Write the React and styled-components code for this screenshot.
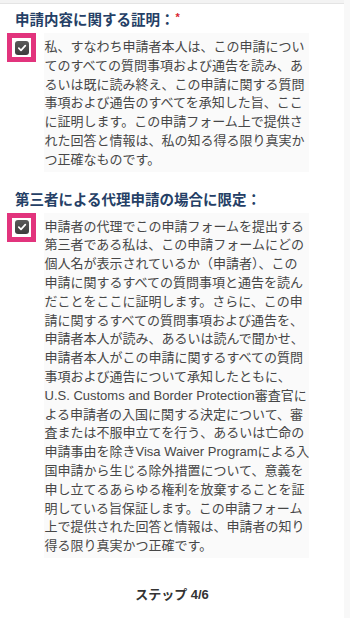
import React from "react";
import styled, { createGlobalStyle } from "styled-components";

const GlobalStyle = createGlobalStyle`
  html, body { margin: 0; padding: 0; background: #ffffff; }
  body { font-family: "Liberation Sans", "Noto Sans CJK JP", sans-serif; }
`;

const Page = styled.div`
  display: flex;
  width: 350px;
  min-height: 618px;
  background: #ffffff;
`;

const Main = styled.main`
  flex: 1;
  display: flex;
  flex-direction: column;
`;

const ScrollEdge = styled.div`
  width: 6px;
  background: #f8f8f8;
`;

const TopBar = styled.div`
  height: 3px;
  background: #f3f3f3;
  border-bottom: 1px solid #e4e4e4;
  margin-bottom: 1px;
`;

const Section = styled.section`
  display: flex;
  flex-direction: column;
  padding: 0 7px;
  margin-top: ${(p) => p.$top}px;
`;

const Title = styled.h2`
  margin: 0 0 3px 8px;
  font-family: "Liberation Sans", "Noto Sans CJK JP", sans-serif;
  font-size: 14.5px;
  line-height: 20px;
  font-weight: 700;
  color: #253f66;
  white-space: nowrap;
`;

const Required = styled.span`
  color: #d8232f;
  font-size: 11px;
  vertical-align: top;
  line-height: 14px;
  margin-left: 1px;
`;

const Row = styled.div`
  display: flex;
  align-items: flex-start;
  gap: 8px;
`;

const Highlight = styled.div`
  flex: none;
  width: 19px;
  height: 19px;
  border: 5px solid #e2347d;
  background: #ffffff;
  display: flex;
  align-items: center;
  justify-content: center;
`;

const Box = styled.div`
  width: 14px;
  height: 14px;
  border-radius: 3px;
  background: linear-gradient(#5a5a5a, #3c3c3c);
  display: flex;
  align-items: center;
  justify-content: center;
`;

const Body = styled.div`
  width: 264px;
  padding: 5px 0 2px 0.5px;
  background: #fafafa;
  font-family: "Liberation Sans", "Noto Sans CJK JP", sans-serif;
  font-size: 13px;
  line-height: 18.8px;
  color: #474747;
`;

const Line = styled.span`
  display: block;
  white-space: nowrap;
`;

const Step = styled.div`
  margin-top: 27px;
  text-align: center;
  font-family: "Liberation Sans", "Noto Sans CJK JP", sans-serif;
  font-size: 13px;
  line-height: 19px;
  font-weight: 700;
  color: #333333;
`;

const Check = () => (
  <Highlight>
    <Box>
      <svg width="10" height="10" viewBox="0 0 10 10">
        <path d="M1.8 5.2 L4 7.4 L8.3 2.6" fill="none" stroke="#ffffff" strokeWidth="1.7" strokeLinecap="round" strokeLinejoin="round" />
      </svg>
    </Box>
  </Highlight>
);

const first = [
  "私、すなわち申請者本人は、この申請につい",
  "てのすべての質問事項および通告を読み、あ",
  "るいは既に読み終え、この申請に関する質問",
  "事項および通告のすべてを承知した旨、ここ",
  "に証明します。この申請フォーム上で提供さ",
  "れた回答と情報は、私の知る得る限り真実か",
  "つ正確なものです。",
];

const second = [
  "申請者の代理でこの申請フォームを提出する",
  "第三者である私は、この申請フォームにどの",
  "個人名が表示されているか（申請者）、この",
  "申請に関するすべての質問事項と通告を読ん",
  "だことをここに証明します。さらに、この申",
  "請に関するすべての質問事項および通告を、",
  "申請者本人が読み、あるいは読んで聞かせ、",
  "申請者本人がこの申請に関するすべての質問",
  "事項および通告について承知したともに、",
  "U.S. Customs and Border Protection審査官に",
  "よる申請者の入国に関する決定について、審",
  "査または不服申立てを行う、あるいは亡命の",
  "申請事由を除きVisa Waiver Programによる入",
  "国申請から生じる除外措置について、意義を",
  "申し立てるあらゆる権利を放棄することを証",
  "明している旨保証します。この申請フォーム",
  "上で提供された回答と情報は、申請者の知り",
  "得る限り真実かつ正確です。",
];

export default function App() {
  return (
    <>
      <GlobalStyle />
      <Page>
        <Main>
          <TopBar />
          <Section $top={5}>
            <Title>
              申請内容に関する証明：<Required>*</Required>
            </Title>
            <Row>
              <Check />
              <Body>
                {first.map((l) => (
                  <Line key={l}>{l}</Line>
                ))}
              </Body>
            </Row>
          </Section>
          <Section $top={18}>
            <Title>第三者による代理申請の場合に限定：</Title>
            <Row>
              <Check />
              <Body>
                {second.map((l) => (
                  <Line key={l}>{l}</Line>
                ))}
              </Body>
            </Row>
          </Section>
          <Step>ステップ 4/6</Step>
        </Main>
        <ScrollEdge />
      </Page>
    </>
  );
}
